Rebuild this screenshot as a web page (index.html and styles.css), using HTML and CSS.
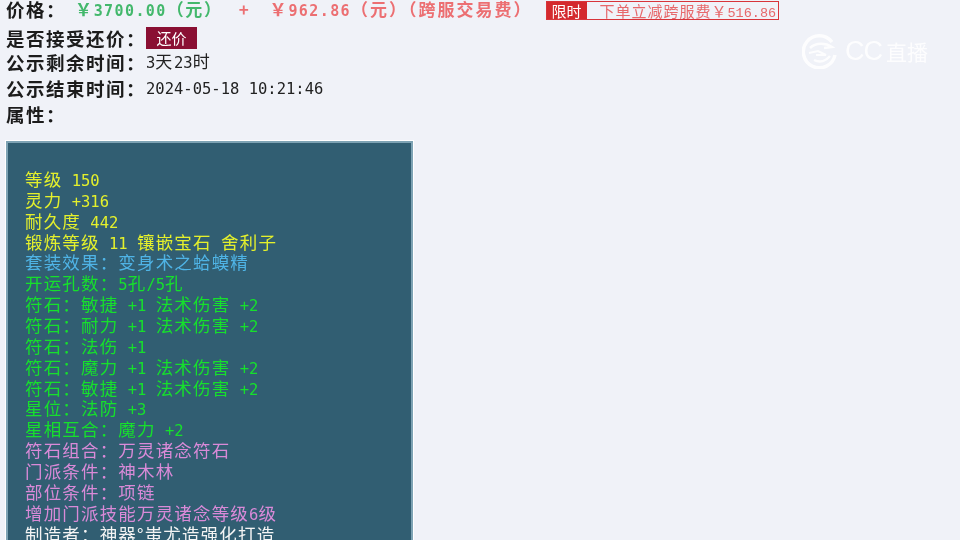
FILE: index.html
```html
<!DOCTYPE html>
<html lang="zh-CN">
<head>
  <meta charset="UTF-8">
  <title>藏宝阁商品详情</title>
  <link rel="stylesheet" href="styles.css">
</head>
<body>
  <div class="info">
    <div class="row row-price">
      <span class="label label-price">价格：</span>
      <span class="price green">￥<b class="amount">3700.00</b>（元）</span>
      <span class="plus">+</span>
      <span class="price red">￥<b class="amount">962.86</b>（元）（跨服交易费）</span>
      <span class="promo">
        <span class="promo-tag">限时</span>
        <span class="promo-text">下单立减跨服费￥<i class="promo-num">516.86</i></span>
      </span>
    </div>
    <div class="row row-offer">
      <span class="label">是否接受还价：</span>
      <button class="offer-btn">还价</button>
    </div>
    <div class="row">
      <span class="label">公示剩余时间：</span>
      <span class="value"><span class="n">3</span>天<span class="n">23</span>时</span>
    </div>
    <div class="row">
      <span class="label">公示结束时间：</span>
      <span class="value"><span class="n">2024-05-18 10:21:46</span></span>
    </div>
    <div class="row">
      <span class="label">属性：</span>
    </div>
  </div>

  <div class="attrs">
    <p class="yellow">等级<span class="n"> 150</span></p>
    <p class="yellow">灵力<span class="n"> +316</span></p>
    <p class="yellow">耐久度<span class="n"> 442</span></p>
    <p class="yellow">锻炼等级<span class="n"> 11 </span>镶嵌宝石<span class="n"> </span>舍利子</p>
    <p class="blue">套装效果：变身术之蛤蟆精</p>
    <p class="lime">开运孔数：<span class="n">5</span>孔<span class="n">/5</span>孔</p>
    <p class="lime">符石：敏捷<span class="n"> +1 </span>法术伤害<span class="n"> +2</span></p>
    <p class="lime">符石：耐力<span class="n"> +1 </span>法术伤害<span class="n"> +2</span></p>
    <p class="lime">符石：法伤<span class="n"> +1</span></p>
    <p class="lime">符石：魔力<span class="n"> +1 </span>法术伤害<span class="n"> +2</span></p>
    <p class="lime">符石：敏捷<span class="n"> +1 </span>法术伤害<span class="n"> +2</span></p>
    <p class="lime">星位：法防<span class="n"> +3</span></p>
    <p class="lime">星相互合：魔力<span class="n"> +2</span></p>
    <p class="pink">符石组合：万灵诸念符石</p>
    <p class="pink">门派条件：神木林</p>
    <p class="pink">部位条件：项链</p>
    <p class="pink">增加门派技能万灵诸念等级<span class="n">6</span>级</p>
    <p class="white">制造者：神器°蚩尤造强化打造</p>
  </div>

  <div class="watermark">
    <svg class="wm-icon" width="36" height="36" viewBox="0 0 36 36" fill="none" stroke="#fff">
      <path d="M30 9 A16 16 0 1 0 33 22" stroke-width="3.5"/>
      <path d="M8 15 C14 9 24 10 30 14 L22 15" stroke-width="2.5"/>
      <path d="M7 20 L16 18 L24 22 L14 22" stroke-width="2"/>
      <path d="M12 27 C18 30 24 28 28 23" stroke-width="2.5"/>
    </svg>
    <span class="wm-cc">CC</span>
    <span class="wm-name">直播</span>
  </div>
</body>
</html>
```

FILE: styles.css
```css
* { margin: 0; padding: 0; box-sizing: border-box; }
html, body { width: 100%; height: 100%; overflow: hidden; }
body {
  position: relative;
  background: #f0f2f8;
  color: #222;
  font-family: "Noto Sans CJK SC", "Liberation Sans", sans-serif;
  font-size: 17px;
  letter-spacing: 1.67px;
  filter: blur(0.4px);
}
.n {
  font-family: "DejaVu Sans Mono", monospace;
  font-size: 15.5px;
  letter-spacing: 0;
}

.info { padding-left: 6px; }
.row {
  display: flex;
  align-items: center;
  height: 26px;
  line-height: 26px;
}
.row-price { align-items: flex-start; height: 21px; line-height: 18px; }
.row-offer { height: 22px; margin-top: 6px; }
.label {
  width: 140px;
  font-size: 18.5px;
  letter-spacing: 1.5px;
  font-weight: 700;
  color: #1c1c1c;
}
.label-price { width: 69px; }
.value { color: #222; }
.price { white-space: nowrap; font-weight: 700; }
.amount {
  font-family: "DejaVu Sans Mono", monospace;
  font-size: 15px;
  letter-spacing: 1.4px;
}
.green { color: #43b86c; }
.red { color: #ec6f72; margin-right: 13px; letter-spacing: 2px; }
.plus { margin: 0 19px 0 16px; color: #ec6f72; font-weight: 700; }
.promo {
  display: flex;
  height: 19px;
  margin-top: 1px;
  border: 1px solid #d8343a;
  letter-spacing: 0;
}
.promo-tag {
  width: 40px;
  background: #d42a2e;
  color: #fff;
  font-size: 15px;
  line-height: 17px;
  text-align: center;
}
.promo-text {
  padding: 0 2px 0 13px;
  color: #e7686b;
  font-size: 15px;
  line-height: 17px;
  white-space: nowrap;
  letter-spacing: 1px;
}
.promo-num {
  font-family: "Liberation Mono", monospace;
  font-style: normal;
  font-size: 13.5px;
  letter-spacing: 0;
}
.offer-btn {
  width: 51px;
  height: 22px;
  border: 0;
  background: #8a0f33;
  color: #fff;
  font: inherit;
  font-size: 15px;
  line-height: 22px;
  letter-spacing: 0;
}

.attrs {
  width: 407px;
  height: 440px;
  margin: 14px 0 0 6px;
  padding: 26px 0 0 17px;
  background: #315e72;
  border: 2px solid #7ea3b4;
  outline: 1px solid #fff;
  line-height: 20.87px;
  font-size: 17.5px;
  letter-spacing: 1.17px;
}
.attrs p { height: 20.87px; white-space: pre; }
.yellow { color: #e4f02c; }
.blue { color: #4fb4e6; }
.lime { color: #16e02c; }
.pink { color: #d98ad8; }
.white { color: #f4f4f4; }

.watermark {
  position: absolute;
  top: 33px;
  left: 802px;
  display: flex;
  align-items: center;
  color: #fff;
  letter-spacing: 0;
  opacity: 0.85;
}
.wm-cc {
  margin-left: 7px;
  font-family: "Liberation Sans", sans-serif;
  font-size: 27px;
  line-height: 36px;
  letter-spacing: -1px;
}
.wm-name { margin-left: 4px; font-size: 21px; line-height: 36px; }
```
